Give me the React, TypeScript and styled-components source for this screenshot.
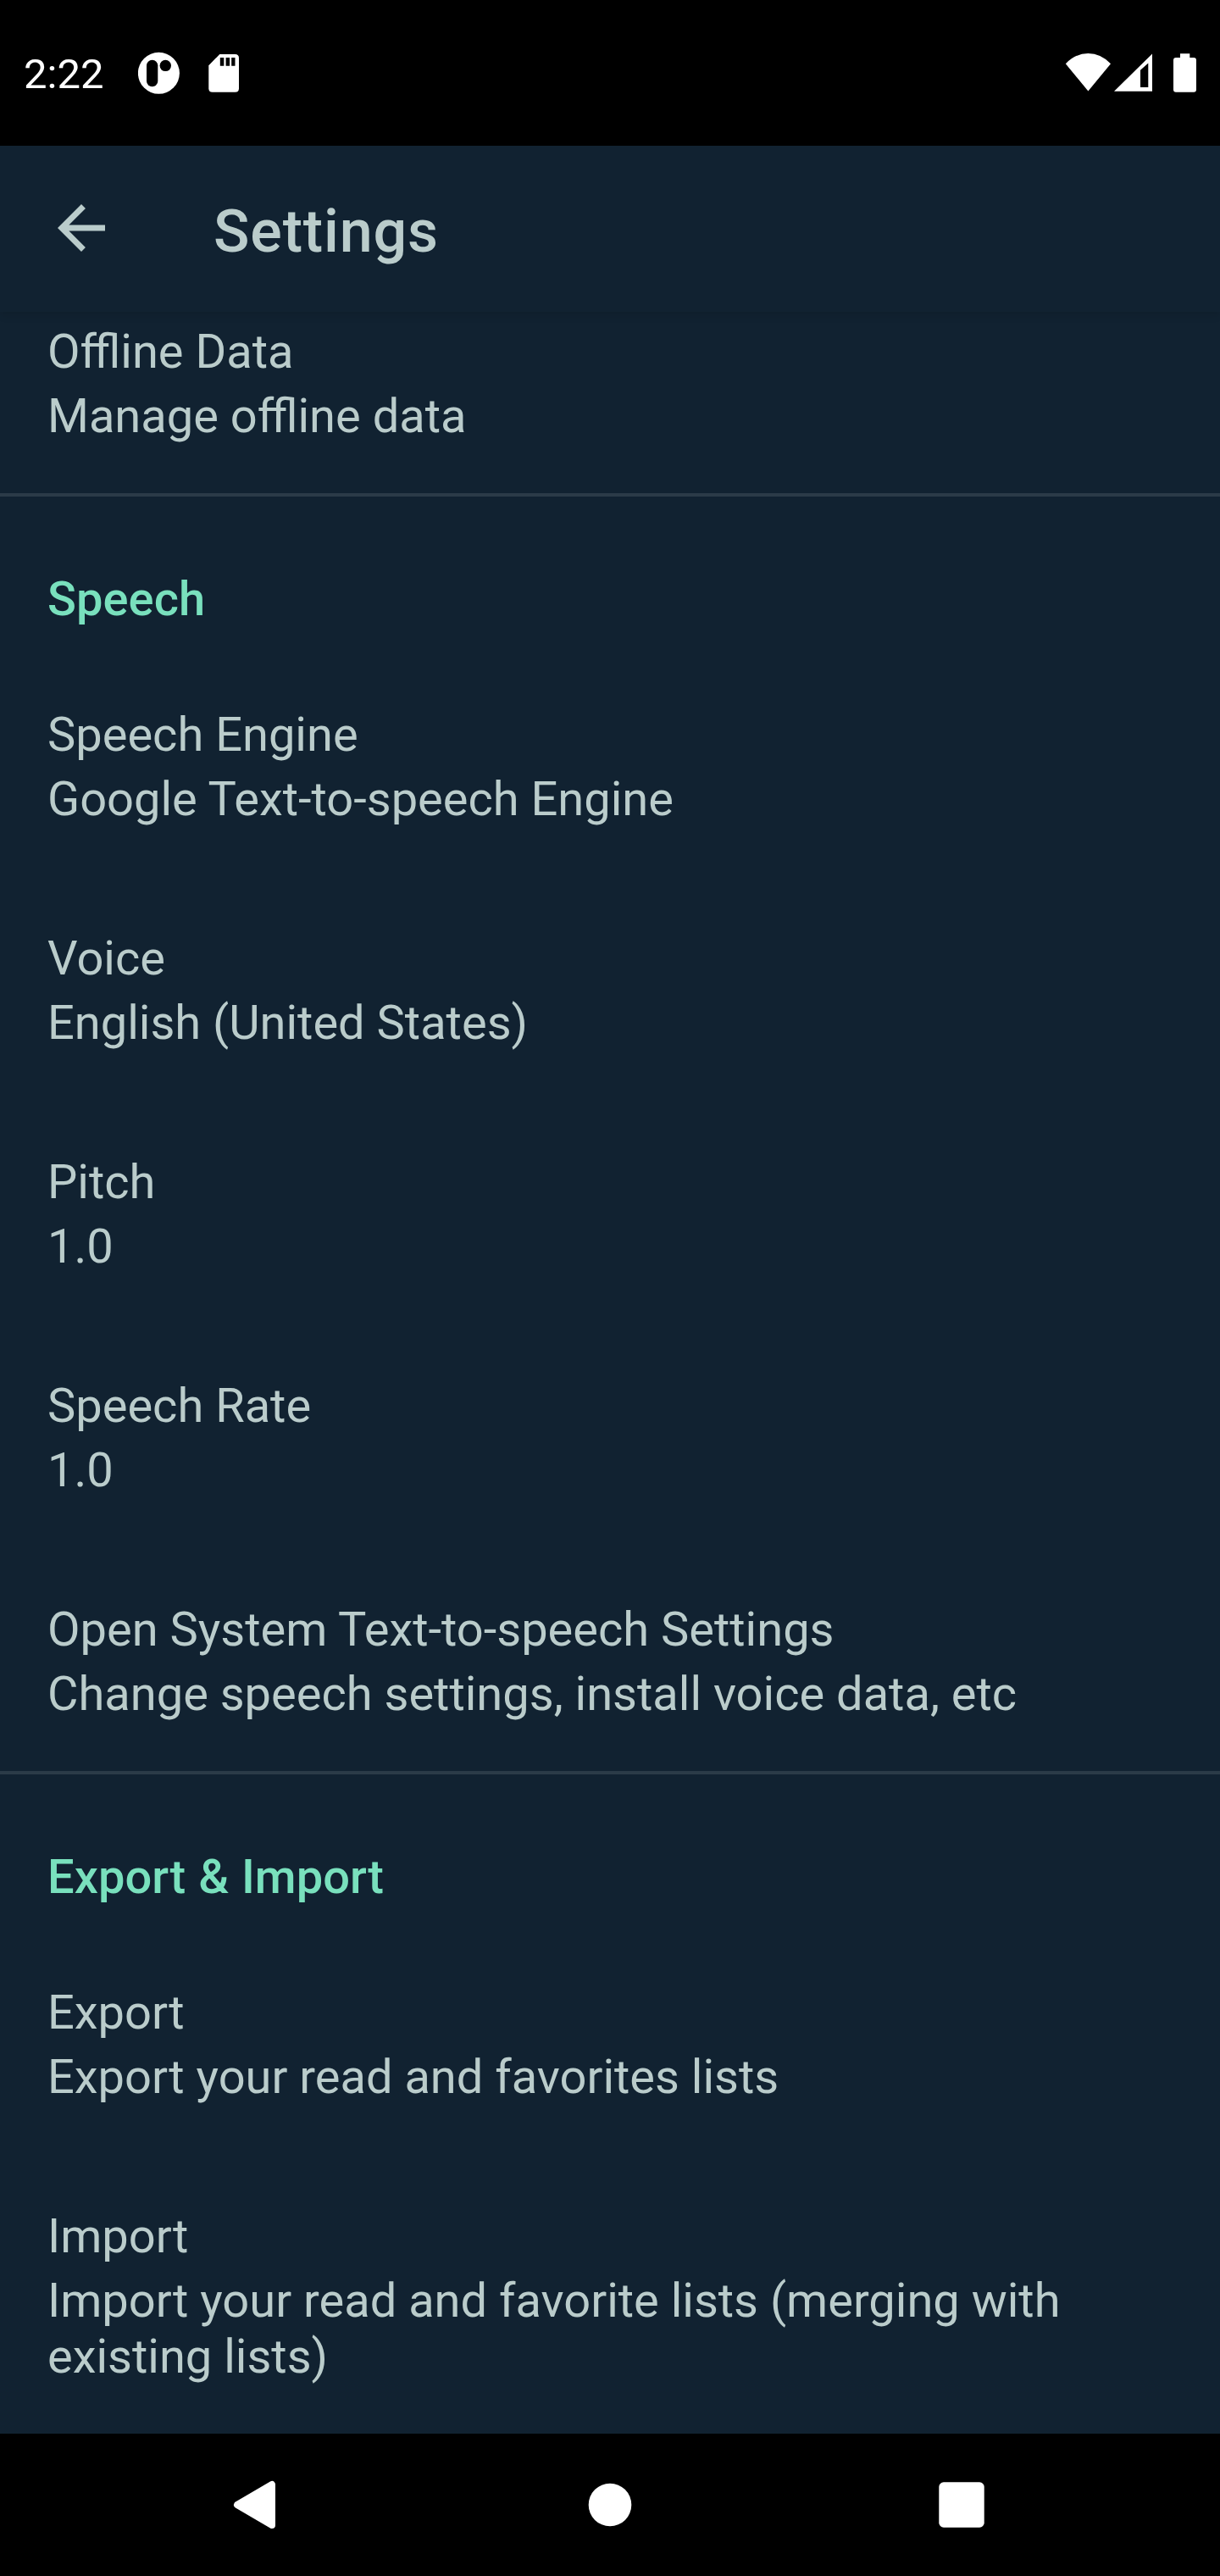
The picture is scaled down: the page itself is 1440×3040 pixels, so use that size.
import React from 'react';
import styled, { createGlobalStyle } from 'styled-components';

const Global = createGlobalStyle`
  * { box-sizing: border-box; }
  body { margin: 0; background: #000; font-family: Roboto, sans-serif; }
  svg { display: block; flex: none; }
`;

const Screen = styled.div`
  display: flex;
  flex-direction: column;
  width: 1440px;
  height: 3040px;
  overflow: hidden;
  background: #112231;
  color: #bacccb;
`;

const StatusBar = styled.header`
  display: flex;
  flex: none;
  align-items: center;
  height: 172px;
  padding: 0 28px;
  background: #000;
  color: #fff;
`;

const Clock = styled.span`
  width: 135px;
  padding-top: 4px;
  font-size: 49px;
  line-height: 60px;
`;

const Notifications = styled.div`
  display: flex;
  align-items: center;
  gap: 34px;
`;

const Indicators = styled.div`
  display: flex;
  align-items: center;
  gap: 3px;
  margin-left: auto;
`;

const Battery = styled.svg`
  margin-left: 22px;
`;

const AppBar = styled.div`
  display: flex;
  flex: none;
  align-items: center;
  height: 196px;
  padding-left: 54px;
  box-shadow: 0 3px 10px rgba(0, 0, 0, 0.13);
`;

const BackButton = styled.button`
  flex: none;
  width: 84px;
  height: 84px;
  margin: 0 0 3px;
  padding: 0;
  border: 0;
  background: none;
  color: inherit;
`;

const Title = styled.h1`
  margin: 6px 0 0 114px;
  font-size: 70px;
  font-weight: 500;
  line-height: 82px;
  letter-spacing: 0.875px;
`;

const Content = styled.main`
  display: flex;
  flex: 1;
  flex-direction: column;
  min-height: 0;
`;

const Section = styled.section<{ $divided?: boolean }>`
  flex: none;
  border-top: ${(p) => (p.$divided ? '4px solid #2b3b48' : 'none')};
`;

const SectionTitle = styled.h2`
  margin: 0;
  padding: 88px 56px 30px;
  color: #79e0bd;
  font-size: 56px;
  font-weight: 500;
  line-height: 66px;
  letter-spacing: 0.08px;
  word-spacing: 0.8px;
`;

const Row = styled.div<{ $first?: boolean }>`
  padding: ${(p) => (p.$first ? '14px' : '64px')} 56px 58px;
  font-size: 56px;
  line-height: 66px;
`;

const Line = styled.div<{ $summary?: boolean }>`
  margin-top: ${(p) => (p.$summary ? '10px' : '0')};
`;

const NavBar = styled.nav`
  display: flex;
  flex: none;
  align-items: center;
  justify-content: space-between;
  height: 168px;
  padding: 0 258px;
  background: #000;
`;

function Item({ title, text, first }: { title: string; text: string; first?: boolean }) {
  return (
    <Row $first={first}>
      <Line>{title}</Line>
      <Line $summary>{text}</Line>
    </Row>
  );
}

export default function App() {
  return (
    <Screen>
      <Global />
      <StatusBar>
        <Clock>2:22</Clock>
        <Notifications>
          <svg width="49" height="50" viewBox="0 0 49 50">
            <circle cx="24.4" cy="25.3" r="24.5" fill="#fff" />
            <rect x="10" y="9.7" width="13.3" height="31.6" rx="6.6" fill="#000" />
            <circle cx="32.3" cy="16.4" r="6.7" fill="#000" />
          </svg>
          <svg width="36" height="46" viewBox="0 0 36 46">
            <path
              d="M13.3 1H31.5Q36 1 36 5.5V41.2Q36 45.7 31.5 45.7H4.8Q.3 45.7 .3 41.2V14.2Z"
              fill="#fff"
            />
            <path d="M13.8 5h4.5v9.7h-4.5zM20.6 5h4.5v9.7h-4.5zM27.2 5h4.3v9.7h-4.3z" fill="#000" />
          </svg>
        </Notifications>
        <Indicators>
          <svg width="55" height="46" viewBox="0 0 55 46">
            <path d="M.8 12.2Q12.6 0 27.4 0T54 12.2L27.4 44.6Z" fill="#fff" />
          </svg>
          <svg width="45" height="46" viewBox="0 0 45 46">
            <path d="M0 44.7L45 .4V44.7ZM31 19.7V40H40.3V11.4Z" fill="#fff" fillRule="evenodd" />
          </svg>
          <Battery width="27" height="46" viewBox="0 0 27 46">
            <path
              d="M8 .2H19.3V5H24Q27 5 27 8V42.7Q27 45.7 24 45.7H3Q0 45.7 0 42.7V8Q0 5 3 5H8Z"
              fill="#fff"
            />
          </Battery>
        </Indicators>
      </StatusBar>
      <AppBar>
        <BackButton aria-label="Back">
          <svg width="84" height="84" viewBox="0 0 24 24" fill="currentColor">
            <path d="M20 11H7.83l5.59-5.59L12 4l-8 8 8 8 1.41-1.41L7.83 13H20v-2z" />
          </svg>
        </BackButton>
        <Title>Settings</Title>
      </AppBar>
      <Content>
        <Section>
          <Item first title="Offline Data" text="Manage offline data" />
        </Section>
        <Section $divided>
          <SectionTitle>Speech</SectionTitle>
          <Item title="Speech Engine" text="Google Text-to-speech Engine" />
          <Item title="Voice" text="English (United States)" />
          <Item title="Pitch" text="1.0" />
          <Item title="Speech Rate" text="1.0" />
          <Item
            title="Open System Text-to-speech Settings"
            text="Change speech settings, install voice data, etc"
          />
        </Section>
        <Section $divided>
          <SectionTitle>Export &amp; Import</SectionTitle>
          <Item title="Export" text="Export your read and favorites lists" />
          <Item title="Import" text="Import your read and favorite lists (merging with existing lists)" />
        </Section>
      </Content>
      <NavBar>
        <svg width="84" height="84" viewBox="0 0 84 84" fill="#fff">
          <path d="M22 42L63 18V66Z" stroke="#fff" strokeWidth="8" strokeLinejoin="round" />
        </svg>
        <svg width="84" height="84" viewBox="0 0 84 84" fill="#fff">
          <circle cx="42" cy="42" r="25.3" />
        </svg>
        <svg width="84" height="84" viewBox="0 0 84 84" fill="#fff">
          <rect x="10.3" y="15.3" width="53.4" height="53.4" rx="5.5" />
        </svg>
      </NavBar>
    </Screen>
  );
}
